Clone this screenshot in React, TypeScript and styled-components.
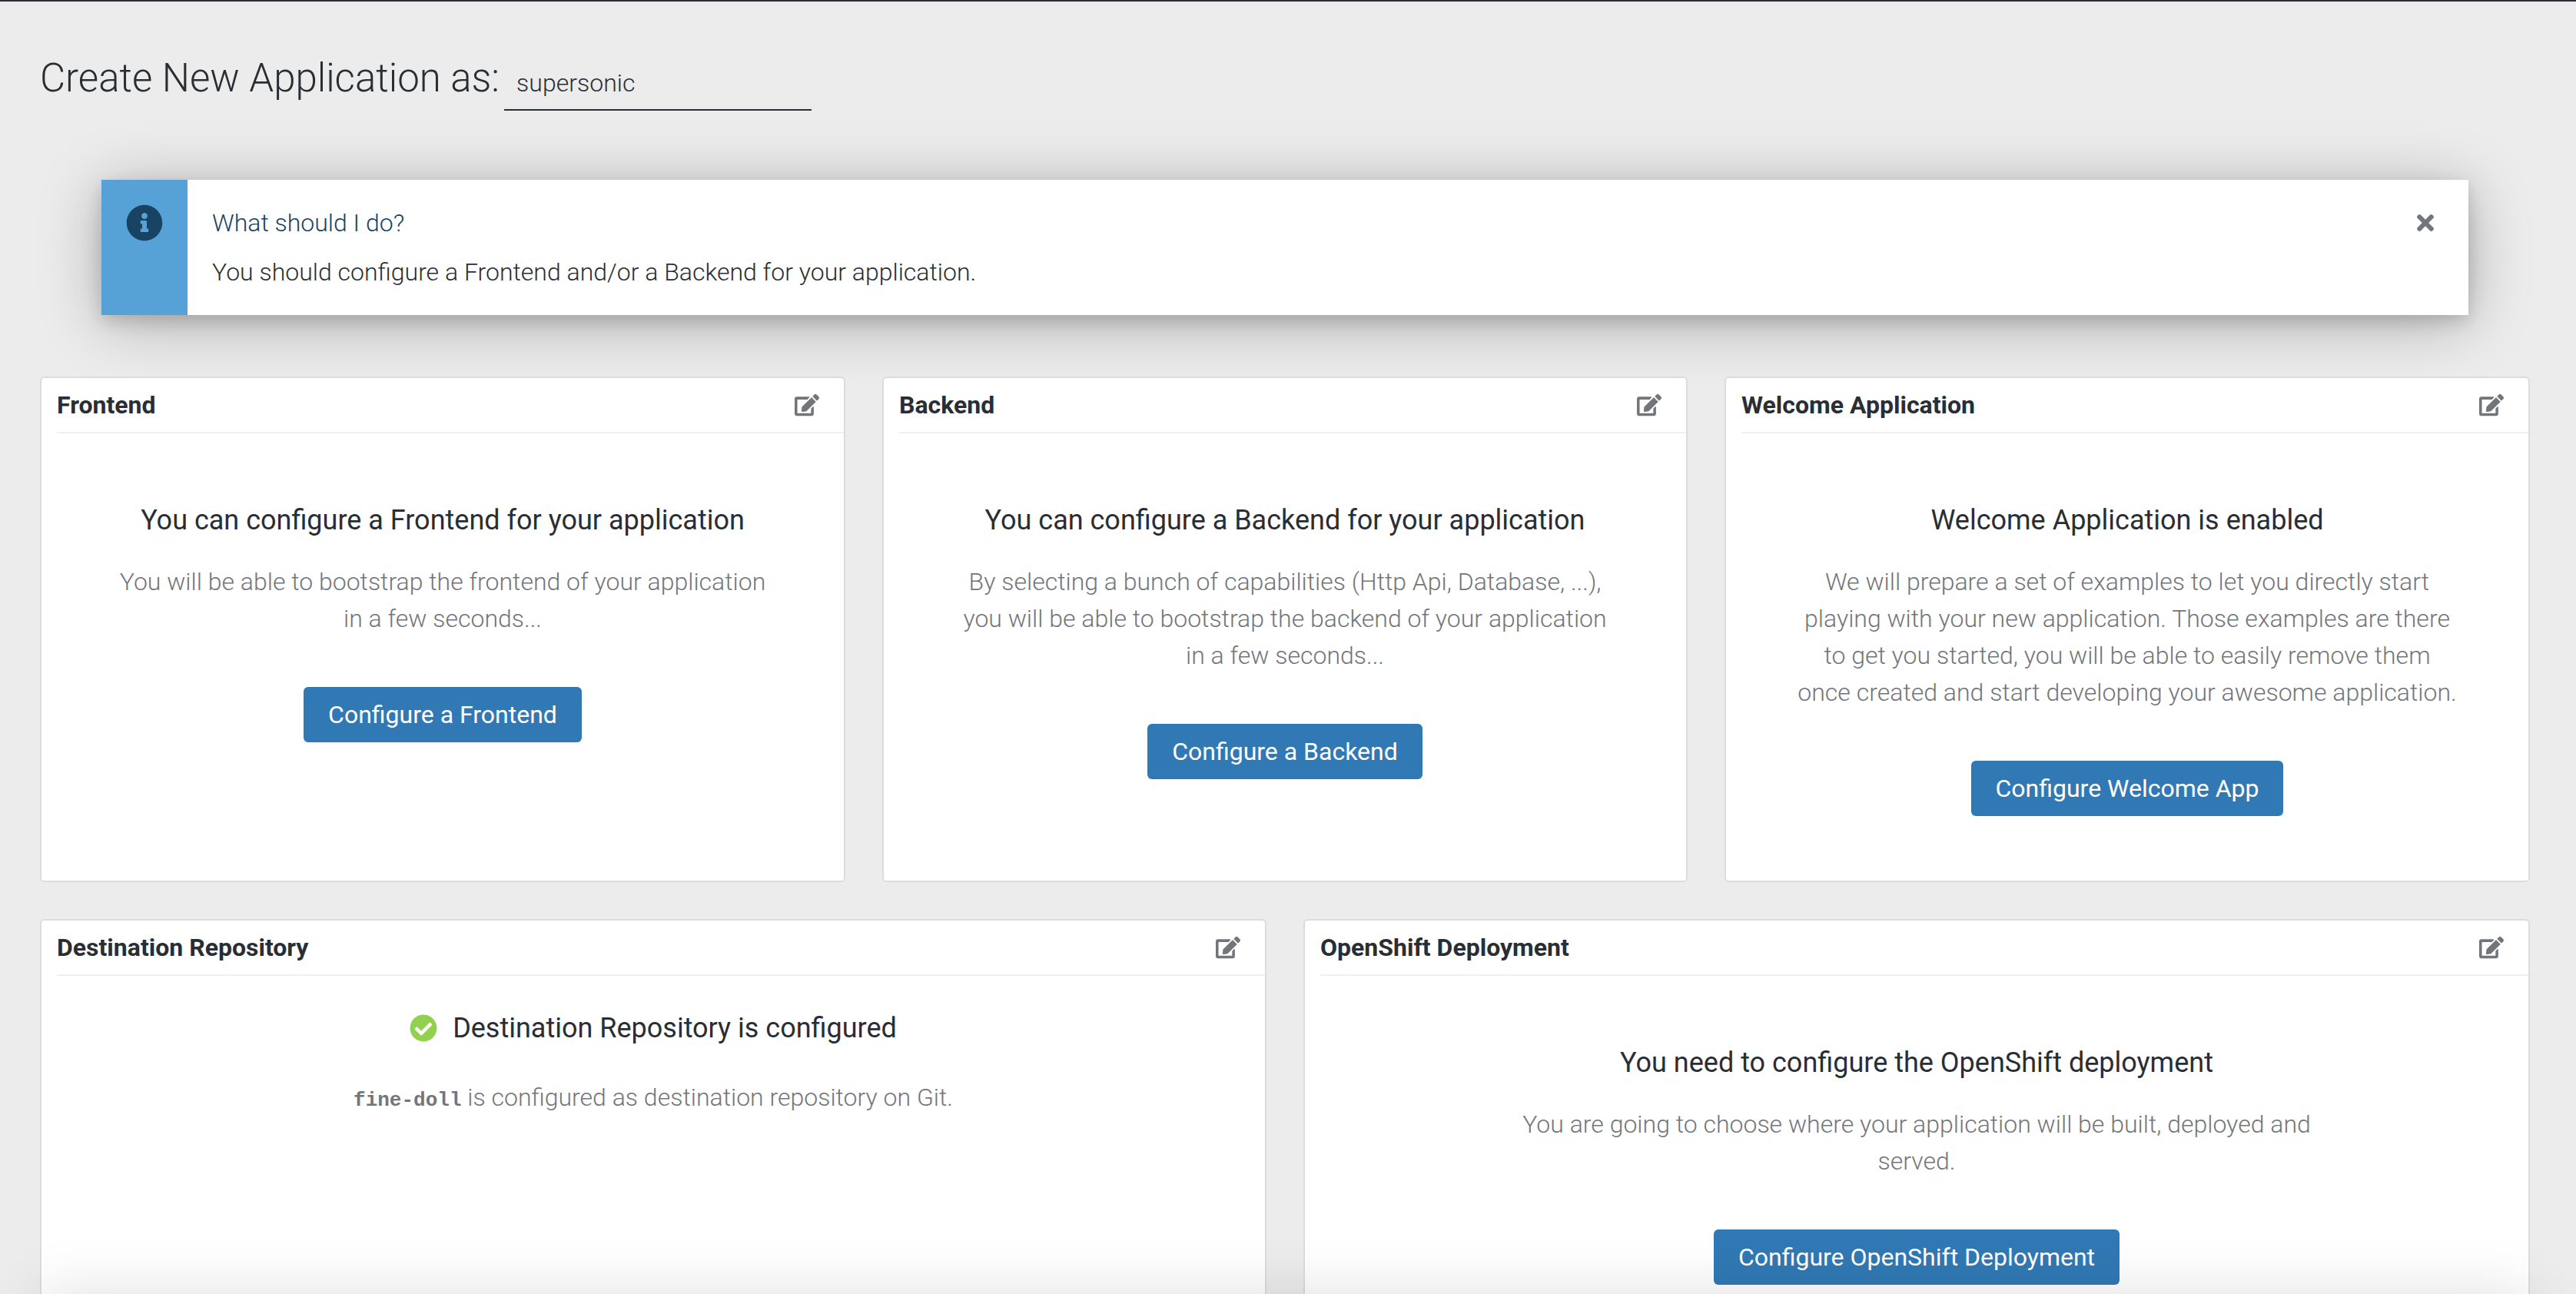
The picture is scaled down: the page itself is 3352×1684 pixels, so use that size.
import React from 'react';
import styled, { createGlobalStyle } from 'styled-components';
import { FaEdit, FaTimes, FaInfoCircle, FaCheckCircle } from 'react-icons/fa';

const ink = '#292e34';
const muted = '#72767b';

const GlobalStyle = createGlobalStyle`
  *, *::before, *::after { box-sizing: border-box; }
  html, body { margin: 0; height: 100%; }
  body {
    overflow: hidden;
    background: #ececec;
    color: ${ink};
    font-family: Roboto, "Liberation Sans", sans-serif;
    font-size: 32px;
    font-weight: 300;
    line-height: 48px;
  }
  #root { height: 100%; }
  h1, h2, h3, p { margin: 0; }
`;

const Page = styled.main`
  height: 100%;
  overflow: hidden;
  border-top: 2px solid ${ink};
  padding: 60px 60px 0 52px;
`;

const NameForm = styled.form`
  display: flex;
  align-items: baseline;
  gap: 6px;
`;

const PageTitle = styled.h1`
  font-size: 51px;
  font-weight: 300;
  line-height: 80px;
`;

const NameInput = styled.input`
  width: 400px;
  height: 70px;
  padding: 0 16px;
  border: 0;
  border-bottom: 2px solid ${ink};
  background: transparent;
  color: ${ink};
  font: inherit;
  font-size: 32px;
  outline: 0;
`;

const Alert = styled.section`
  display: flex;
  margin: 90px 80px 80px;
  background: #fff;
  box-shadow: 0 10px 80px rgba(0, 0, 0, 0.28), 0 8px 20px rgba(0, 0, 0, 0.15);
`;

const AlertIcon = styled.div`
  display: flex;
  width: 112px;
  padding-top: 32px;
  justify-content: center;
  background: #56a2d7;
  color: #194363;
  font-size: 48px;
`;

const AlertBody = styled.div`
  flex: 1;
  padding: 32px;
`;

const AlertTitle = styled.h2`
  margin-bottom: 16px;
  color: #194363;
  font-size: 32px;
  font-weight: 300;
  line-height: 48px;
`;

const IconButton = styled.button`
  display: flex;
  align-items: center;
  justify-content: center;
  padding: 0;
  border: 0;
  background: none;
  color: ${muted};
  font-size: 32px;
  cursor: pointer;
`;

const AlertClose = styled.div`
  padding: 40px 40px 0 0;
`;

const Row = styled.div`
  display: grid;
  grid-template-columns: repeat(${(p: { $columns: number }) => p.$columns}, 1fr);
  gap: 48px;
  margin-bottom: 48px;
`;

const Card = styled.section`
  border: 2px solid #dcdcdc;
  border-radius: 6px;
  background: #fff;
`;

const CardHeader = styled.header`
  display: flex;
  align-items: center;
  justify-content: space-between;
  height: 72px;
  margin-left: 20px;
  padding-right: 32px;
  border-bottom: 2px solid #f0f0f0;
`;

const CardTitle = styled.h2`
  font-size: 32px;
  font-weight: 700;
  line-height: 48px;
`;

const CardBody = styled.div`
  padding: 0 58px;
`;

const Content = styled.div`
  max-width: 1120px;
  margin: 0 auto;
  padding: ${(p: { $compact?: boolean }) => (p.$compact ? '40px 32px' : '85px 32px 84px')};
  text-align: center;
`;

const ContentTitle = styled.h3`
  display: flex;
  align-items: center;
  justify-content: center;
  gap: 20px;
  margin-bottom: ${(p: { $wide?: boolean }) => (p.$wide ? 38 : 28)}px;
  font-size: 36px;
  font-weight: 400;
  line-height: 56px;
`;

const Description = styled.p`
  color: ${muted};
`;

const RepoName = styled.code`
  font-family: "Liberation Mono", monospace;
  font-size: 26px;
  font-weight: 700;
`;

const Primary = styled.button`
  height: 72px;
  margin-top: 65px;
  padding: 0 32px;
  border: 0;
  border-radius: 6px;
  background: #3179b5;
  color: #fff;
  font: inherit;
  font-weight: 400;
  cursor: pointer;
`;

const ActionDock = styled.div`
  position: fixed;
  top: 100%;
  right: 60px;
  left: 52px;
  height: 160px;
  background: #fff;
  box-shadow: 0 0 80px rgba(0, 0, 0, 0.13);
`;

type PanelProps = { title: string; children: React.ReactNode };

function Panel({ title, children }: PanelProps) {
  return (
    <Card>
      <CardHeader>
        <CardTitle>{title}</CardTitle>
        <IconButton type="button" aria-label={`Edit ${title}`}>
          <FaEdit />
        </IconButton>
      </CardHeader>
      <CardBody>{children}</CardBody>
    </Card>
  );
}

type EmptyProps = { heading: string; text: string; action: string };

function EmptyState({ heading, text, action }: EmptyProps) {
  return (
    <Content>
      <ContentTitle>{heading}</ContentTitle>
      <Description>{text}</Description>
      <Primary type="button">{action}</Primary>
    </Content>
  );
}

export default function App() {
  return (
    <>
      <GlobalStyle />
      <Page>
        <NameForm>
          <PageTitle>
            <label htmlFor="app-name">Create New Application as:</label>
          </PageTitle>
          <NameInput id="app-name" defaultValue="supersonic" />
        </NameForm>

        <Alert>
          <AlertIcon><FaInfoCircle /></AlertIcon>
          <AlertBody>
            <AlertTitle>What should I do?</AlertTitle>
            <p>You should configure a Frontend and/or a Backend for your application.</p>
          </AlertBody>
          <AlertClose>
            <IconButton type="button" aria-label="Close"><FaTimes /></IconButton>
          </AlertClose>
        </Alert>

        <Row $columns={3}>
          <Panel title="Frontend">
            <EmptyState
              heading="You can configure a Frontend for your application"
              text="You will be able to bootstrap the frontend of your application in a few seconds..."
              action="Configure a Frontend"
            />
          </Panel>
          <Panel title="Backend">
            <EmptyState
              heading="You can configure a Backend for your application"
              text="By selecting a bunch of capabilities (Http Api, Database, ...), you will be able to bootstrap the backend of your application in a few seconds..."
              action="Configure a Backend"
            />
          </Panel>
          <Panel title="Welcome Application">
            <EmptyState
              heading="Welcome Application is enabled"
              text="We will prepare a set of examples to let you directly start playing with your new application. Those examples are there to get you started, you will be able to easily remove them once created and start developing your awesome application."
              action="Configure Welcome App"
            />
          </Panel>
        </Row>

        <Row $columns={2}>
          <Panel title="Destination Repository">
            <Content $compact>
              <ContentTitle $wide>
                <FaCheckCircle color="#92d050" />
                Destination Repository is configured
              </ContentTitle>
              <Description>
                <RepoName>fine-doll</RepoName> is configured as destination repository on Git.
              </Description>
            </Content>
          </Panel>
          <Panel title="OpenShift Deployment">
            <EmptyState
              heading="You need to configure the OpenShift deployment"
              text="You are going to choose where your application will be built, deployed and served."
              action="Configure OpenShift Deployment"
            />
          </Panel>
        </Row>
      </Page>
      <ActionDock />
    </>
  );
}
